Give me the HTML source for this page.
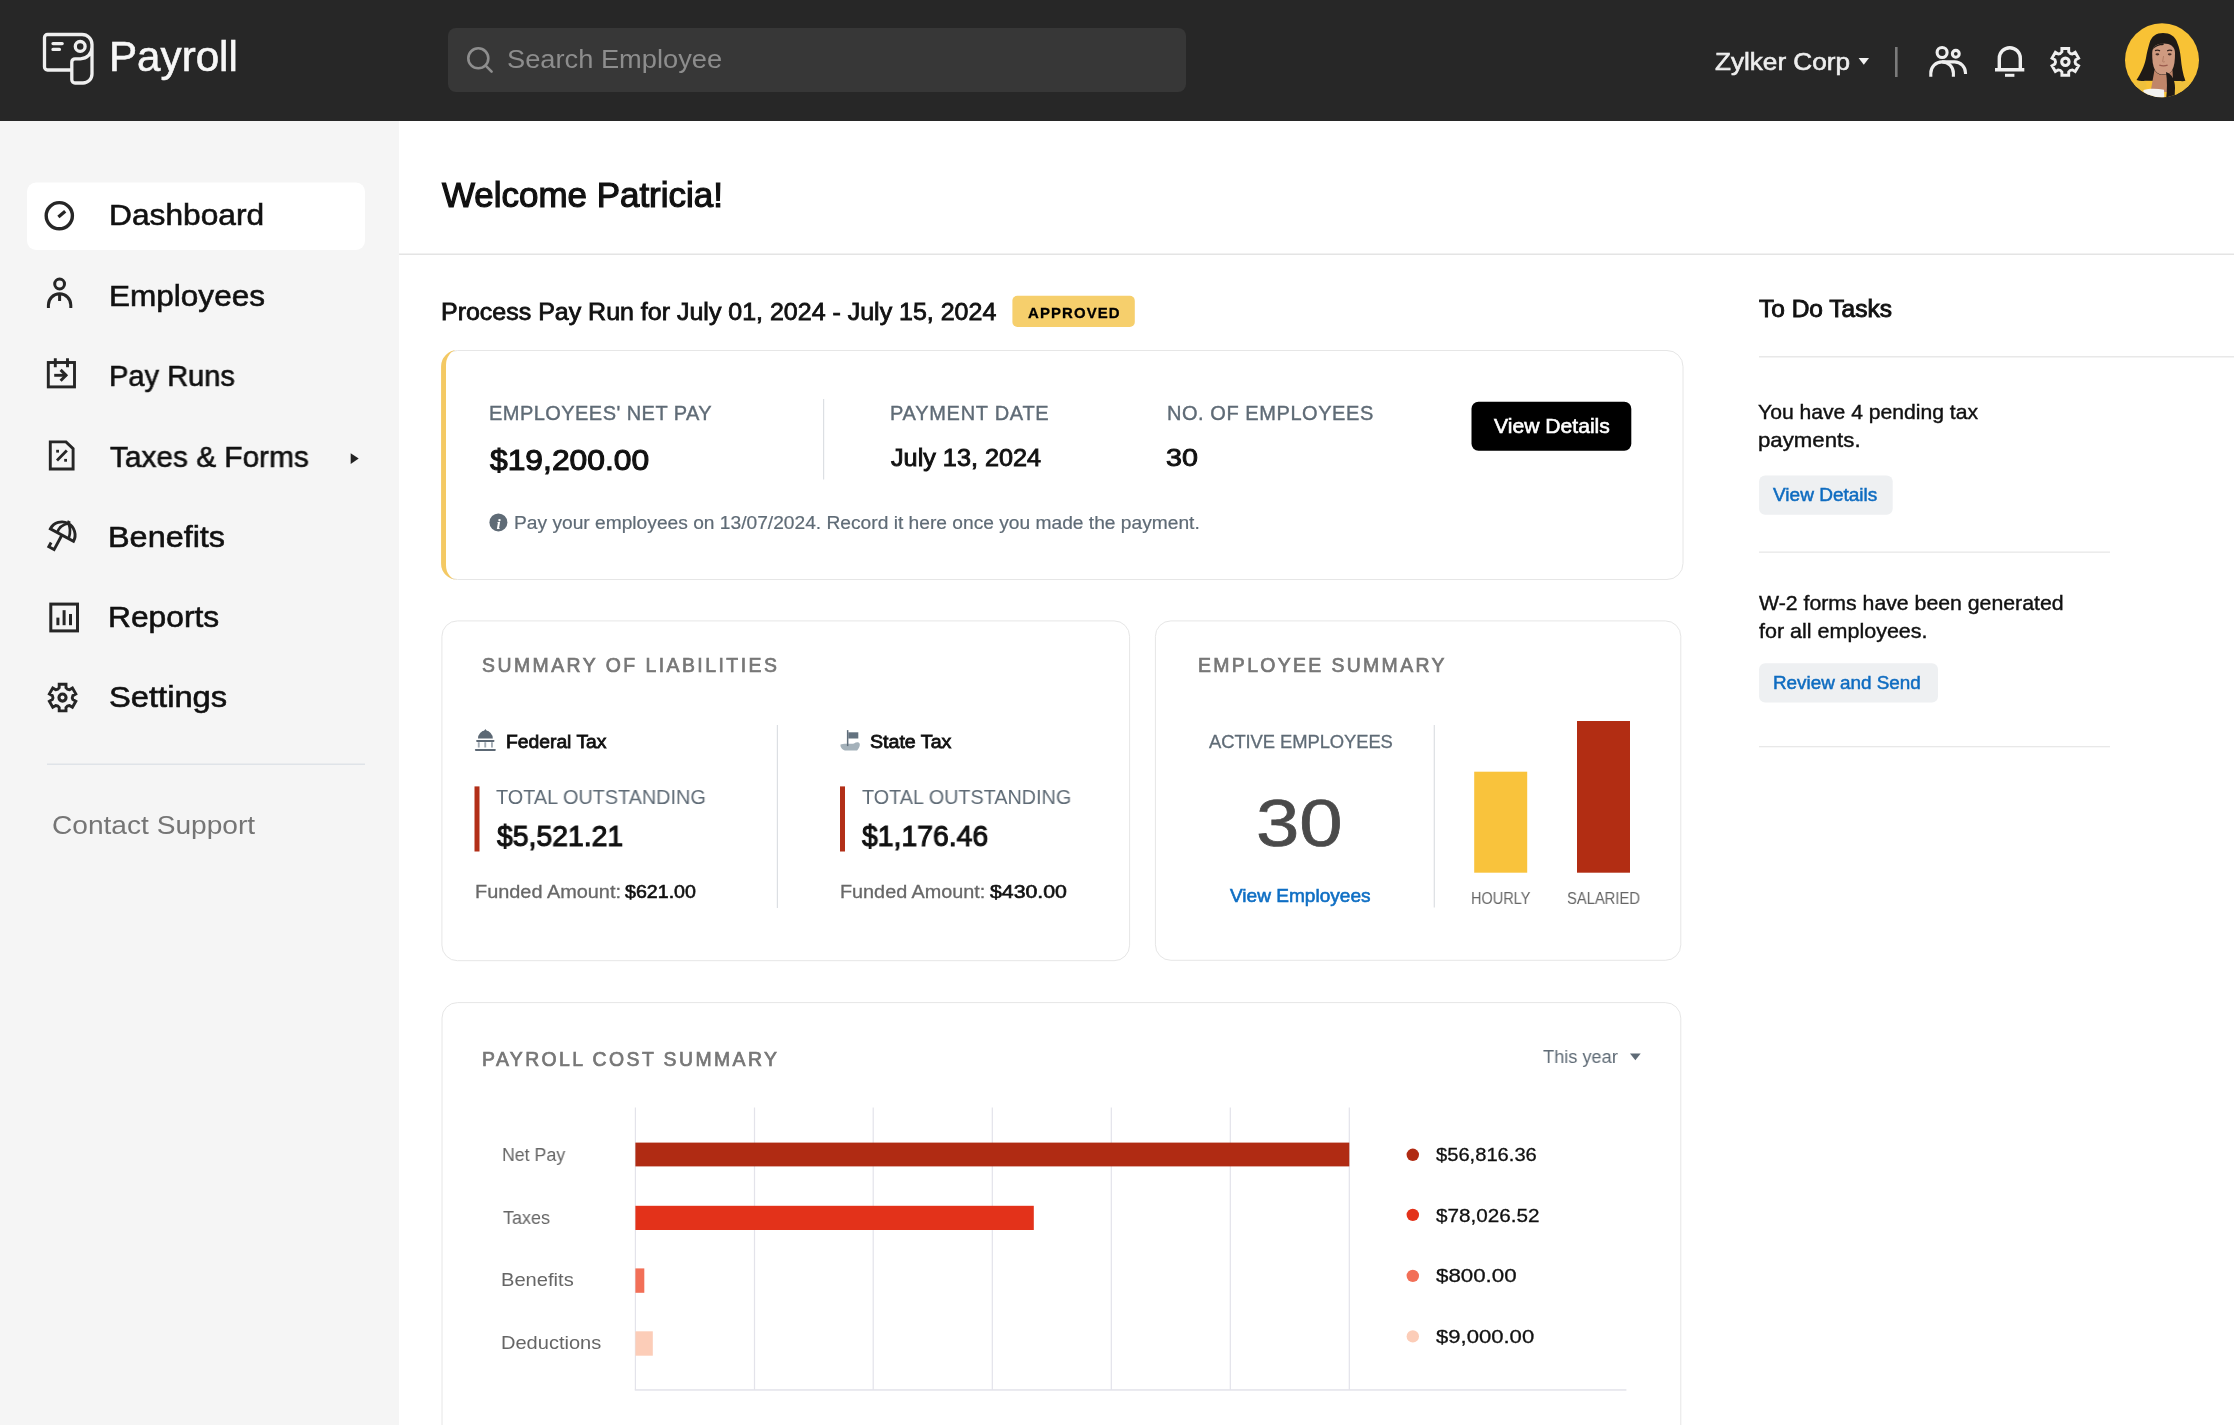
<!DOCTYPE html>
<html><head><meta charset="utf-8"><title>Payroll Dashboard</title>
<style>
html,body{margin:0;padding:0;width:2234px;height:1425px;overflow:hidden;background:#fff;}
body{position:relative;font-family:"Liberation Sans", sans-serif;}
svg.layer{position:absolute;left:0;top:0;width:2234px;height:1425px;}
.t{position:absolute;white-space:pre;line-height:1;transform-origin:0 0;will-change:transform;font-family:"Liberation Sans", sans-serif;}
</style></head><body>
<svg class="layer" viewBox="0 0 2234 1425">
  <!-- header -->
  <rect x="0" y="0" width="2234" height="121" fill="#272727"/>
  <rect x="448" y="28" width="738" height="64" rx="8" fill="#373737"/>
  <!-- sidebar -->
  <rect x="0" y="121" width="399" height="1304" fill="#f5f5f5"/>
  <rect x="27" y="182.5" width="338" height="67.5" rx="9" fill="#ffffff"/>
  <rect x="47" y="763.5" width="318" height="1.5" fill="#dfe3e8"/>
  <!-- main dividers -->
  <rect x="399" y="253.5" width="1835" height="1.5" fill="#e4e4e4"/>
  <!-- pay run card -->
  <rect x="441.5" y="350.5" width="1241.5" height="229" rx="16" fill="#fff" stroke="#e6e6e6" stroke-width="1"/>
  <path d="M457.5 350.1 A16.4 16.4 0 0 0 441.1 366.5 V563.5 A16.4 16.4 0 0 0 457.5 579.9 A 11.5 15 0 0 1 446 564.5 V365.5 A 11.5 15 0 0 1 457.5 350.1 Z" fill="#f4c963"/>
  <rect x="823" y="399" width="1.2" height="80.5" fill="#dcdfe3"/>
  <rect x="1471.5" y="401.8" width="159.8" height="48.9" rx="7" fill="#000"/>
  <!-- approved badge -->
  <rect x="1012.4" y="295.8" width="122.4" height="31.2" rx="5" fill="#f6cf6c"/>
  <!-- todo -->
  <rect x="1759" y="356" width="475" height="1.5" fill="#e8e8e8"/>
  <rect x="1759.1" y="475.4" width="133.6" height="39.4" rx="6" fill="#eef0f2"/>
  <rect x="1759" y="551.5" width="351" height="1.3" fill="#e8e8e8"/>
  <rect x="1759.1" y="663.3" width="178.9" height="39.1" rx="6" fill="#eef0f2"/>
  <rect x="1759" y="746" width="351" height="1.3" fill="#e8e8e8"/>
  <!-- liabilities card -->
  <rect x="441.9" y="620.9" width="687.7" height="339.8" rx="15.5" fill="#fff" stroke="#e6e6e6" stroke-width="1"/>
  <rect x="776.8" y="725" width="1.2" height="183" fill="#dcdfe3"/>
  <rect x="474.5" y="786.4" width="5" height="65.1" fill="#b22f18"/>
  <rect x="840" y="786.4" width="5" height="65.1" fill="#b22f18"/>
  <!-- employee summary card -->
  <rect x="1155.4" y="620.9" width="525.4" height="339.4" rx="15.5" fill="#fff" stroke="#e6e6e6" stroke-width="1"/>
  <rect x="1433.7" y="725" width="1.2" height="182.5" fill="#dcdfe3"/>
  <rect x="1474.2" y="771.7" width="53" height="101" fill="#f9c33c"/>
  <rect x="1577" y="721" width="53" height="151.7" fill="#b22d13"/>
  <!-- payroll cost card -->
  <rect x="442" y="1002.6" width="1238.8" height="500" rx="15.5" fill="#fff" stroke="#e6e6e6" stroke-width="1"/>
  <g fill="#e3e3ea">
    <rect x="634.8" y="1107.5" width="1.2" height="282.5"/>
    <rect x="753.9" y="1107.5" width="1.2" height="282.5"/>
    <rect x="872.6" y="1107.5" width="1.2" height="282.5"/>
    <rect x="991.7" y="1107.5" width="1.2" height="282.5"/>
    <rect x="1110.7" y="1107.5" width="1.2" height="282.5"/>
    <rect x="1229.7" y="1107.5" width="1.2" height="282.5"/>
    <rect x="1348.7" y="1107.5" width="1.2" height="282.5"/>
    <rect x="634.8" y="1389.2" width="991.6" height="1.5"/>
  </g>
  <rect x="635.4" y="1142.6" width="713.9" height="23.8" fill="#b02b13"/>
  <rect x="635.4" y="1205.8" width="398.4" height="24.2" fill="#e3321a"/>
  <rect x="635.4" y="1268.4" width="8.9" height="24.4" fill="#f26f57"/>
  <rect x="635.4" y="1331.3" width="17.4" height="24.4" fill="#fccdb8"/>
  <circle cx="1412.8" cy="1154.8" r="6.2" fill="#b02b13"/>
  <circle cx="1412.8" cy="1214.9" r="6.2" fill="#e3321a"/>
  <circle cx="1412.8" cy="1275.9" r="6.2" fill="#f26f57"/>
  <circle cx="1412.8" cy="1336.4" r="6.2" fill="#fccdb8"/>
</svg>

<div class="t" style="left:109.20px;top:36.00px;font-size:42.03px;color:#f7f7f7;-webkit-text-stroke:0.6px #f7f7f7;transform:scaleX(1.0032);">Payroll</div>
<div class="t" style="left:507.15px;top:46.00px;font-size:26.09px;color:#8d8d8d;transform:scaleX(1.0450);">Search Employee</div>
<div class="t" style="left:1714.58px;top:50.00px;font-size:24.49px;color:#eeeeee;-webkit-text-stroke:0.6px #eeeeee;transform:scaleX(1.0666);">Zylker Corp</div>
<div class="t" style="left:109.03px;top:200.00px;font-size:30.07px;color:#111;-webkit-text-stroke:0.6px #111;transform:scaleX(1.0551);">Dashboard</div>
<div class="t" style="left:108.65px;top:281.00px;font-size:30.07px;color:#111;-webkit-text-stroke:0.6px #111;transform:scaleX(1.0488);">Employees</div>
<div class="t" style="left:109.22px;top:361.00px;font-size:30.07px;color:#111;-webkit-text-stroke:0.6px #111;transform:scaleX(0.9665);">Pay Runs</div>
<div class="t" style="left:110.03px;top:442.00px;font-size:30.07px;color:#111;-webkit-text-stroke:0.6px #111;transform:scaleX(0.9915);">Taxes &amp; Forms</div>
<div class="t" style="left:107.99px;top:522.00px;font-size:30.07px;color:#111;-webkit-text-stroke:0.6px #111;transform:scaleX(1.0777);">Benefits</div>
<div class="t" style="left:108.04px;top:602.00px;font-size:30.07px;color:#111;-webkit-text-stroke:0.6px #111;transform:scaleX(1.0565);">Reports</div>
<div class="t" style="left:108.51px;top:682.00px;font-size:30.07px;color:#111;-webkit-text-stroke:0.6px #111;transform:scaleX(1.0878);">Settings</div>
<div class="t" style="left:52.09px;top:812.00px;font-size:26.23px;color:#757575;transform:scaleX(1.0720);">Contact Support</div>
<div class="t" style="left:441.61px;top:178.00px;font-size:34.49px;color:#111;-webkit-text-stroke:1.2px #111;transform:scaleX(1.0131);">Welcome Patricia!</div>
<div class="t" style="left:441.45px;top:300.00px;font-size:24.20px;color:#111;-webkit-text-stroke:0.8px #111;transform:scaleX(1.0325);">Process Pay Run for July 01, 2024 - July 15, 2024</div>
<div class="t" style="left:1027.85px;top:306.00px;font-size:14.93px;color:#000000;font-weight:700;letter-spacing:1.115px;-webkit-text-stroke:0.3px #000000;">APPROVED</div>
<div class="t" style="left:489.40px;top:403.00px;font-size:20.00px;color:#5f6b76;letter-spacing:0.452px;-webkit-text-stroke:0.4px #5f6b76;">EMPLOYEES' NET PAY</div>
<div class="t" style="left:490.39px;top:445.00px;font-size:29.71px;color:#111;-webkit-text-stroke:1.1px #111;transform:scaleX(1.0706);">$19,200.00</div>
<div class="t" style="left:889.60px;top:403.00px;font-size:20.00px;color:#5f6b76;letter-spacing:0.720px;-webkit-text-stroke:0.4px #5f6b76;">PAYMENT DATE</div>
<div class="t" style="left:890.75px;top:446.00px;font-size:24.64px;color:#111;-webkit-text-stroke:0.9px #111;transform:scaleX(1.0242);">July 13, 2024</div>
<div class="t" style="left:1166.60px;top:403.00px;font-size:20.00px;color:#5f6b76;letter-spacing:0.561px;-webkit-text-stroke:0.4px #5f6b76;">NO. OF EMPLOYEES</div>
<div class="t" style="left:1166.07px;top:446.00px;font-size:24.29px;color:#111;-webkit-text-stroke:0.9px #111;transform:scaleX(1.1802);">30</div>
<div class="t" style="left:1493.51px;top:416.00px;font-size:20.43px;color:#fff;-webkit-text-stroke:0.6px #fff;transform:scaleX(1.0345);">View Details</div>
<div class="t" style="left:513.62px;top:514.00px;font-size:18.12px;color:#5f6b76;-webkit-text-stroke:0.2px #5f6b76;transform:scaleX(1.0594);">Pay your employees on 13/07/2024. Record it here once you made the payment.</div>
<div class="t" style="left:1759.35px;top:297.00px;font-size:24.06px;color:#111;-webkit-text-stroke:0.9px #111;transform:scaleX(1.0184);">To Do Tasks</div>
<div class="t" style="left:1757.79px;top:402.00px;font-size:20.14px;color:#111;-webkit-text-stroke:0.4px #111;transform:scaleX(1.0494);">You have 4 pending tax</div>
<div class="t" style="left:1758.09px;top:430.00px;font-size:20.14px;color:#111;-webkit-text-stroke:0.4px #111;transform:scaleX(1.1049);">payments.</div>
<div class="t" style="left:1773.26px;top:486.00px;font-size:18.26px;color:#0f6cc0;-webkit-text-stroke:0.5px #0f6cc0;transform:scaleX(1.0419);">View Details</div>
<div class="t" style="left:1759.21px;top:593.00px;font-size:20.14px;color:#111;-webkit-text-stroke:0.4px #111;transform:scaleX(1.0566);">W-2 forms have been generated</div>
<div class="t" style="left:1759.20px;top:621.00px;font-size:20.14px;color:#111;-webkit-text-stroke:0.4px #111;transform:scaleX(1.0687);">for all employees.</div>
<div class="t" style="left:1772.81px;top:674.00px;font-size:18.26px;color:#0f6cc0;-webkit-text-stroke:0.5px #0f6cc0;transform:scaleX(1.0335);">Review and Send</div>
<div class="t" style="left:481.75px;top:656.00px;font-size:19.42px;color:#777777;letter-spacing:2.469px;-webkit-text-stroke:0.7px #777777;">SUMMARY OF LIABILITIES</div>
<div class="t" style="left:505.50px;top:732.00px;font-size:19.13px;color:#111;-webkit-text-stroke:0.8px #111;transform:scaleX(1.0093);">Federal Tax</div>
<div class="t" style="left:496.40px;top:788.00px;font-size:19.93px;color:#5f6b76;transform:scaleX(0.9959);">TOTAL OUTSTANDING</div>
<div class="t" style="left:496.52px;top:821.00px;font-size:29.71px;color:#111;-webkit-text-stroke:1.1px #111;transform:scaleX(0.9555);">$5,521.21</div>
<div class="t" style="left:474.65px;top:883.00px;font-size:18.26px;color:#686868;-webkit-text-stroke:0.3px #686868;transform:scaleX(1.0897);">Funded Amount:</div>
<div class="t" style="left:625.22px;top:883.00px;font-size:18.00px;color:#111;-webkit-text-stroke:0.6px #111;transform:scaleX(1.0901);">$621.00</div>
<div class="t" style="left:869.80px;top:732.00px;font-size:19.13px;color:#111;-webkit-text-stroke:0.8px #111;transform:scaleX(1.0256);">State Tax</div>
<div class="t" style="left:862.00px;top:788.00px;font-size:19.93px;color:#5f6b76;transform:scaleX(0.9931);">TOTAL OUTSTANDING</div>
<div class="t" style="left:861.52px;top:821.00px;font-size:29.71px;color:#111;-webkit-text-stroke:1.1px #111;transform:scaleX(0.9555);">$1,176.46</div>
<div class="t" style="left:839.85px;top:883.00px;font-size:18.26px;color:#686868;-webkit-text-stroke:0.3px #686868;transform:scaleX(1.0851);">Funded Amount:</div>
<div class="t" style="left:989.84px;top:883.00px;font-size:18.00px;color:#111;-webkit-text-stroke:0.6px #111;transform:scaleX(1.1824);">$430.00</div>
<div class="t" style="left:1198.05px;top:656.00px;font-size:19.42px;color:#777777;letter-spacing:2.361px;-webkit-text-stroke:0.7px #777777;">EMPLOYEE SUMMARY</div>
<div class="t" style="left:1209.15px;top:733.00px;font-size:18.41px;color:#5f6b76;letter-spacing:-0.083px;-webkit-text-stroke:0.3px #5f6b76;">ACTIVE EMPLOYEES</div>
<div class="t" style="left:1256.04px;top:790.00px;font-size:66.86px;color:#4a4a4a;-webkit-text-stroke:0.7px #4a4a4a;transform:scaleX(1.1651);">30</div>
<div class="t" style="left:1230.30px;top:887.00px;font-size:18.84px;color:#0f6fc4;-webkit-text-stroke:0.6px #0f6fc4;transform:scaleX(1.0122);">View Employees</div>
<div class="t" style="left:1471.02px;top:890.00px;font-size:16.09px;color:#666666;transform:scaleX(0.9034);">HOURLY</div>
<div class="t" style="left:1566.76px;top:890.00px;font-size:16.09px;color:#666666;transform:scaleX(0.9165);">SALARIED</div>
<div class="t" style="left:482.45px;top:1050.00px;font-size:19.42px;color:#777777;letter-spacing:2.411px;-webkit-text-stroke:0.7px #777777;">PAYROLL COST SUMMARY</div>
<div class="t" style="left:1543.21px;top:1048.00px;font-size:18.70px;color:#5f6b76;transform:scaleX(0.9731);">This year</div>
<div class="t" style="left:501.55px;top:1146.00px;font-size:18.48px;color:#666666;transform:scaleX(0.9614);">Net Pay</div>
<div class="t" style="left:502.61px;top:1209.00px;font-size:18.48px;color:#666666;transform:scaleX(0.9740);">Taxes</div>
<div class="t" style="left:501.38px;top:1271.00px;font-size:18.48px;color:#666666;transform:scaleX(1.0896);">Benefits</div>
<div class="t" style="left:501.37px;top:1334.00px;font-size:18.48px;color:#666666;transform:scaleX(1.0853);">Deductions</div>
<div class="t" style="left:1436.35px;top:1145.00px;font-size:19.21px;color:#111;-webkit-text-stroke:0.3px #111;transform:scaleX(1.0496);">$56,816.36</div>
<div class="t" style="left:1436.35px;top:1206.00px;font-size:19.21px;color:#111;-webkit-text-stroke:0.3px #111;transform:scaleX(1.0779);">$78,026.52</div>
<div class="t" style="left:1436.34px;top:1266.00px;font-size:19.21px;color:#111;-webkit-text-stroke:0.3px #111;transform:scaleX(1.1618);">$800.00</div>
<div class="t" style="left:1436.34px;top:1327.00px;font-size:19.21px;color:#111;-webkit-text-stroke:0.3px #111;transform:scaleX(1.1498);">$9,000.00</div>
<svg class="layer" viewBox="0 0 2234 1425">
  <defs><clipPath id="av"><circle cx="2162" cy="60.2" r="37"/></clipPath></defs>
  <!-- logo -->
  <g fill="none" stroke="#efefef" stroke-width="3.3" stroke-linecap="round" stroke-linejoin="round">
    <path d="M70.8 70 H47.5 A3 3 0 0 1 44.5 67 V37.5 A3 3 0 0 1 47.5 34.5 H82 A10 10 0 0 1 92 44.5 V74 A9 9 0 0 1 83 83 H75 A3.2 3.2 0 0 1 71.8 79.8 V62 A3.2 3.2 0 0 1 75 58.8 H80.5 A11.5 11.5 0 0 0 92 47.3"/>
    <circle cx="80.2" cy="46.4" r="4.9"/>
    <path d="M53 43.6 H62.2 M53 49.4 H59.4"/>
  </g>
  <!-- search icon -->
  <g fill="none" stroke="#8e8e8e" stroke-width="2.6" stroke-linecap="round">
    <circle cx="478.3" cy="58.3" r="10"/>
    <path d="M485.6 65.6 L491.6 71.6"/>
  </g>
  <!-- caret -->
  <path d="M1858.6 58 H1869 L1863.8 64.8 Z" fill="#f2f2f2"/>
  <rect x="1895" y="47" width="2.6" height="30" fill="#7b7b7b"/>
  <!-- people -->
  <g fill="none" stroke="#efefef" stroke-width="3.1">
    <circle cx="1942.1" cy="52.5" r="5"/>
    <circle cx="1955.8" cy="53.8" r="3.4"/>
    <path d="M1930.8 76.8 V73.2 A11.3 11.3 0 0 1 1942.1 61.9 A11.3 11.3 0 0 1 1953.4 73.2 V76.8"/>
    <path d="M1942.1 61.9 H1954.5 A11 11 0 0 1 1965.5 72.9 V74"/>
  </g>
  <!-- bell -->
  <g fill="#efefef">
    <path d="M1999.3 69.5 V58.2 A10.5 10.5 0 0 1 2020.3 58.2 V69.5" fill="none" stroke="#efefef" stroke-width="3.4"/>
    <rect x="1995" y="68" width="29.3" height="3.5"/>
    <rect x="2005" y="73.8" width="9.4" height="3"/>
  </g>
  <!-- header gear -->
  <g fill="none" stroke="#efefef" stroke-width="2.9" stroke-linejoin="miter">
    <path d="M2061.90 51.86 L2061.90 48.50 L2068.70 48.50 L2068.70 51.86 A4.2 4.2 0 0 0 2072.29 53.94 L2075.20 52.26 L2078.60 58.14 L2075.69 59.82 A4.2 4.2 0 0 0 2075.69 63.98 L2078.60 65.66 L2075.20 71.54 L2072.29 69.86 A4.2 4.2 0 0 0 2068.70 71.94 L2068.70 75.30 L2061.90 75.30 L2061.90 71.94 A4.2 4.2 0 0 0 2058.31 69.86 L2055.40 71.54 L2052.00 65.66 L2054.91 63.98 A4.2 4.2 0 0 0 2054.91 59.82 L2052.00 58.14 L2055.40 52.26 L2058.31 53.94 A4.2 4.2 0 0 0 2061.90 51.86 Z"/>
    <circle cx="2065.4" cy="61.8" r="3.7" stroke-width="3.1"/>
  </g>
  <!-- avatar -->
  <g clip-path="url(#av)">
    <rect x="2120" y="20" width="84" height="82" fill="#f8c235"/>
    <path d="M2133 84 C2137 80 2142 79.5 2146 80.5 L2147 100 L2128 100 Z" fill="#efc03c"/>
    <path d="M2174 81.5 C2182 80 2189 81 2193 84 L2196 100 L2174 100 Z" fill="#efc03c"/>
    <path d="M2163 33 C2156.5 33 2151.5 36 2149.4 43.4 C2147.8 49 2146.8 53 2146 58 C2144.5 66 2140.5 74 2136.5 80 C2139.5 81.2 2142.5 81.2 2145 80.7 L2181 81 C2182.5 81.3 2184 81.2 2185.4 80.7 C2182.8 74 2181.5 66 2180.8 58 C2180.2 52 2179.2 47 2177.5 43.4 C2175.5 36 2169.5 33 2163 33 Z" fill="#1f1a17"/>
    <path d="M2152.2 53 C2152.2 46.5 2157 43.5 2163.6 43.5 C2170.2 43.5 2175 46.5 2175 53 C2175 60 2174.6 66 2172 70.5 C2170 73.5 2167 74.6 2163.6 74.6 C2160.2 74.6 2157.2 73.5 2155.2 70.5 C2152.6 66 2152.2 60 2152.2 53 Z" fill="#cf9a80"/>
    <path d="M2154.5 70 C2157 74 2160 75 2163.6 75 C2167 75 2170 74 2172.5 70 L2173.5 92 L2150.5 92 Z" fill="#c08569"/>
    <path d="M2163.6 43.2 C2158 43.6 2154 46 2152.6 50 C2155 46.5 2159 45.2 2163.6 45 Z" fill="#1f1a17"/>
    <path d="M2143.5 90 C2149 88.3 2157 88.3 2164 89.8 L2164.5 100 L2143 100 Z" fill="#f3f2f0"/>
    <path d="M2166 72 C2172 74 2175 80 2175 88 L2174.5 100 L2166 100 C2167 92 2167.5 82 2166 72 Z" fill="#1f1a17"/>
    <path d="M2155 50.6 Q2157.5 49.6 2160 50.8 M2167.2 50.8 Q2169.7 49.6 2172.2 50.6" stroke="#3a2620" stroke-width="1.3" fill="none"/>
    <ellipse cx="2157.4" cy="54.3" rx="1.9" ry="1.1" fill="#4a3028"/>
    <ellipse cx="2169.7" cy="54.3" rx="1.9" ry="1.1" fill="#4a3028"/>
    <path d="M2163.6 56 L2162.6 61.5 Q2163.6 62.3 2164.8 61.7" stroke="#b07a62" stroke-width="0.9" fill="none"/>
    <path d="M2159.3 65.2 Q2163.6 66.6 2167.6 65.2" stroke="#9a5a4c" stroke-width="1.4" fill="none"/>
  </g>
  <!-- sidebar icons -->
  <g fill="none" stroke="#262626" stroke-width="3.4">
    <circle cx="59.3" cy="215.7" r="13.1"/>
    <path d="M58.4 217.1 L65.2 211.2" stroke-width="3.3"/>
  </g>
  <g fill="none" stroke="#262626" stroke-width="3">
    <circle cx="59.6" cy="284" r="4.9"/>
    <path d="M48.4 308 V305 A11.2 11.2 0 0 1 70.8 305 V308"/>
    <path d="M59.6 293.5 V301"/>
  </g>
  <g fill="none" stroke="#262626" stroke-width="2.9">
    <rect x="48.3" y="362.5" width="26.2" height="24.4"/>
    <path d="M55.3 358.2 V367.3 M67.5 358.2 V367.3"/>
    <path d="M54.2 375.3 H66.5"/>
    <path d="M60.6 369.9 L66 375.3 L60.6 380.7" stroke-width="3"/>
  </g>
  <g fill="none" stroke="#262626" stroke-width="2.9">
    <path d="M50.3 441.9 H66 L73.1 448.6 V469 H50.3 Z"/>
    <path d="M57 460.5 L66.8 450.6" stroke-width="2.8"/>
  </g>
  <rect x="56.2" y="449.8" width="2.8" height="2.8" fill="#262626"/>
  <rect x="64.2" y="458.9" width="2.8" height="2.8" fill="#262626"/>
  <path d="M350.7 453.3 L358.7 458.6 L350.7 464 Z" fill="#222"/>
  <!-- umbrella -->
  <g fill="none" stroke="#262626" stroke-width="2.9" stroke-linejoin="miter">
    <path d="M50.4 528.8 A13.13 13.13 0 0 1 73.5 541.3 Z"/>
    <path d="M57.3 532.6 Q59.5 525 68.4 523.2" stroke-width="2.7"/>
    <path d="M68.8 538.2 Q71.5 530 68.4 523.2" stroke-width="2.7"/>
    <path d="M68.2 523.4 L69.3 521" stroke-width="3.2"/>
    <path d="M61.95 535.05 L54.1 549.6 L48.8 546.7 L51.1 542.5" stroke-linecap="butt"/>
  </g>
  <g fill="none" stroke="#262626" stroke-width="3">
    <rect x="50.8" y="604.1" width="26.7" height="26.8"/>
  </g>
  <g fill="#262626">
    <rect x="56.4" y="617.6" width="3" height="7.6"/>
    <rect x="62.6" y="610.2" width="3" height="15"/>
    <rect x="69" y="614" width="3" height="11.2"/>
  </g>
  <g fill="none" stroke="#262626" stroke-width="2.9">
    <path d="M59.20 687.77 L59.20 684.30 L66.00 684.30 L66.00 687.77 A4.2 4.2 0 0 0 69.41 689.74 L72.42 688.01 L75.82 693.89 L72.81 695.63 A4.2 4.2 0 0 0 72.81 699.57 L75.82 701.31 L72.42 707.19 L69.41 705.46 A4.2 4.2 0 0 0 66.00 707.43 L66.00 710.90 L59.20 710.90 L59.20 707.43 A4.2 4.2 0 0 0 55.79 705.46 L52.78 707.19 L49.38 701.31 L52.39 699.57 A4.2 4.2 0 0 0 52.39 695.63 L49.38 693.89 L52.78 688.01 L55.79 689.74 A4.2 4.2 0 0 0 59.20 687.77 Z"/>
    <circle cx="62.5" cy="697.6" r="3.55" stroke-width="3.1"/>
  </g>
  <!-- info icon -->
  <circle cx="498.4" cy="522.4" r="9" fill="#5f6b76"/>
  <text x="498.6" y="528.6" font-family="Liberation Serif" font-style="italic" font-weight="700" font-size="15" fill="#fff" text-anchor="middle">i</text>
  <!-- federal icon -->
  <g fill="#5c6874">
    <path d="M478 738.5 A7.4 7.9 0 0 1 492.8 738.5 Z"/>
    <path d="M483.8 731.3 L485.4 729 L487 731.3 Z"/>
    <rect x="476.1" y="740.1" width="18.4" height="1.8" rx="0.8"/>
    <rect x="474.9" y="749" width="20.9" height="1.9" rx="0.8"/>
  </g>
  <g fill="#a3acb4">
    <rect x="477.8" y="742.2" width="1.9" height="5.3"/>
    <rect x="484.3" y="742.2" width="1.9" height="5.3"/>
    <rect x="491" y="742.2" width="1.9" height="5.3"/>
  </g>
  <!-- state icon -->
  <path d="M840.5 744.5 C844 742.8 852 744.5 854 743.5 C856 742 858.5 741.5 859.6 743.5 C860.5 745.5 858.5 749 857 750.6 H845 C843 750 840 747.5 840.5 744.5 Z" fill="#a4b1ba"/>
  <rect x="846.9" y="730.1" width="1.5" height="16" fill="#5f6d7a"/>
  <rect x="848.3" y="732.3" width="10" height="6.2" fill="#63727f"/>
  <!-- this year caret -->
  <path d="M1630 1053.5 H1640.7 L1635.35 1060.2 Z" fill="#5f6b76"/>
</svg>

</body></html>
